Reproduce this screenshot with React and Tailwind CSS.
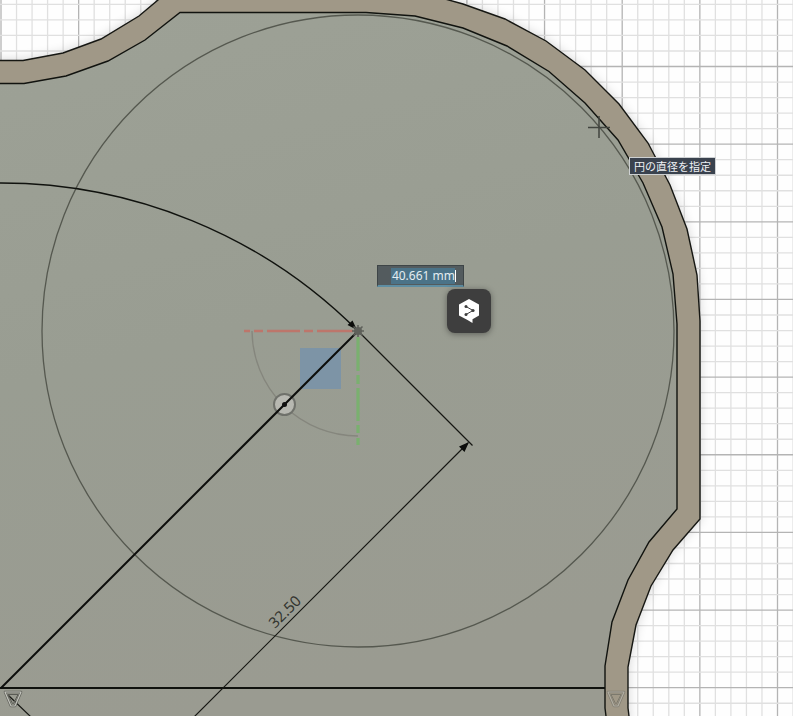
import React from "react";

const OUTER =
  "M-5 60.5 L23 60.5 L63 53 L101 39 L139 16 L158 0 L165 -8 L420 -8 L463 4 L505 19 L546 41 L585 70 L619 104 L648 143 L670 185 L687 229 L697 275 L700 321 L700 519 L673 550 L651 586 L636 625 L628 667 L628 708 L630 724 L-5 724 Z";
const INNER =
  "M-5 83.5 L24 83.5 L66 76 L108 61 L145 40 L180 12.5 L366 12.5 L415 16 L463 28 L507 46 L549 71.5 L585 103 L618 140 L643 183 L662 227 L673 274 L677 324 L677 509 L649 542 L628 580 L612 622 L605 666 L605 708 L607 724 L-5 724 Z";

function Grid() {
  const step = 15.53;
  const columns = Array.from({ length: 52 }, (_, i) => i);
  const rows = Array.from({ length: 47 }, (_, i) => i);
  return (
    <g>
      {columns.map((i) => {
        const x = 1 + i * step;
        const major = i % 5 === 0;
        return <path key={i} d={`M${x} 0V716`} stroke={major ? "#b4b4b4" : "#e0e0e0"} strokeWidth="1.3" />;
      })}
      {rows.map((i) => {
        const y = 4.4 + i * step;
        const major = i % 5 === 4;
        return <path key={i} d={`M0 ${y}H793`} stroke={major ? "#b4b4b4" : "#e0e0e0"} strokeWidth="1.3" />;
      })}
    </g>
  );
}

function Constraint({ x, muted }) {
  return (
    <g transform={`translate(${x} 692)`} strokeLinejoin="round" fill="none" opacity={muted ? 0.5 : 1}>
      <path d="M0 0H16L10 14H6Z" stroke="#60615a" strokeWidth="2.6" />
      <path d="M0 0H16L10 14H6Z" stroke="#c2c3bc" strokeWidth="1.2" />
      <path d="M3 2.5H13L8.500 11.500H7.500Z" stroke="#5a5b55" strokeWidth="1" />
    </g>
  );
}

function Drawing() {
  return (
    <svg
      className="absolute inset-0 h-full w-full"
      viewBox="0 0 793 716"
      preserveAspectRatio="xMinYMin slice"
      role="img"
      aria-label="Sketch"
    >
      <defs>
        <linearGradient id="face" x1="0" y1="0" x2="0.25" y2="1">
          <stop offset="0" stopColor="#9da196" />
          <stop offset="0.5" stopColor="#999d92" />
          <stop offset="1" stopColor="#9a9b91" />
        </linearGradient>
        <filter id="shade" x="-10%" y="-10%" width="120%" height="120%">
          <feGaussianBlur stdDeviation="6" />
        </filter>
      </defs>
      <rect width="793" height="716" fill="#fefefe" />
      <Grid />
      <path d={OUTER} fill="#000" opacity="0.18" filter="url(#shade)" />
      <path d={OUTER} fill="#a09887" stroke="#161713" strokeWidth="1.4" />
      <path d={INNER} fill="url(#face)" stroke="#11130f" strokeWidth="1.4" />

      <circle cx="358" cy="331" r="316" fill="none" stroke="#55584f" strokeWidth="1.3" />
      <path d="M-4 183A505 505 0 0 1 358 331" fill="none" stroke="#10120e" strokeWidth="1.4" />
      <path d="M0 688H605" stroke="#10120e" strokeWidth="2" />

      <path d="M252 331A106 106 0 0 0 358 436" fill="none" stroke="#85867d" strokeWidth="1.3" />
      <rect x="300" y="348" width="41" height="41" fill="#7d94a6" />
      <path d="M244 331h6M254 331h9M267 331h33M304 331h9M317 331h36" stroke="#bd766b" strokeWidth="2.600" />
      <path d="M358 337v34M358 375v9M358 388v33M358 425v8M358 438v7" stroke="#7ab06f" strokeWidth="3.200" />

      <circle cx="284.500" cy="404.500" r="10.500" fill="#b7b8b1" stroke="#6f716b" strokeWidth="2" />
      <path d="M1 688L358 331" stroke="#0c0d0b" strokeWidth="2" />
      <circle cx="284.500" cy="404.500" r="2.500" fill="#111" />

      <path d="M358 331L472.500 445.500M194 717L468 443M8 695L31 717" stroke="#161713" strokeWidth="1.2" />
      <path d="M469 442L464.500 452L459 446.500ZM357 330L347.500 325L352.500 320.500Z" fill="#0c0d0b" />
      <circle cx="358" cy="331" r="4" fill="#5e605a" />
      <path d="M353.500 326.500L362.500 335.500M353.500 335.500L362.500 326.500M358 325v12M352 331h12" stroke="#5e605a" strokeWidth="1.600" />

      <text
        transform="translate(275 629) rotate(-45)"
        className="font-['Noto_Sans',sans-serif] text-[15px]"
        fill="#33352f"
      >
        32.50
      </text>

      <Constraint x={5} />
      <Constraint x={608} muted />
      <path d="M588 127.500H610M599 116V138" stroke="#41443f" strokeWidth="1.500" />
    </svg>
  );
}

function DimensionInput() {
  return (
    <label className="absolute left-[377px] top-[265px] flex h-[22px] w-[87px] items-center justify-end border border-b-2 border-[#3e4547] border-b-[#5e8ea3] bg-[#535b5e] pr-[7px]">
      <input
        aria-label="直径"
        defaultValue="40.661 mm"
        className="h-4 w-16 bg-[#4b7388] p-0 text-right font-['Noto_Sans',sans-serif] text-xs leading-4 text-[#e3edf1] outline-none"
      />
      <span className="h-3 w-px bg-white" />
    </label>
  );
}

function TranslateButton() {
  return (
    <button
      type="button"
      aria-label="翻訳"
      className="absolute left-[447px] top-[289px] flex size-11 items-center justify-center rounded-lg bg-[#3e3e3e] shadow-[0_1px_6px_rgba(0,0,0,0.4)]"
    >
      <svg className="h-6 w-5" viewBox="0 0 20 24" aria-hidden="true">
        <path d="M10 0L20 5.500V16.500L13.500 20.300V24L8.500 21L0 16.500V5.500Z" fill="#fff" />
        <path d="M7 7.500L14 11.500L7 15.500" fill="none" stroke="#3e3e3e" strokeWidth="1" />
        <circle cx="7" cy="7.500" r="1.500" fill="#3e3e3e" />
        <circle cx="14" cy="11.500" r="1.600" fill="#3e3e3e" />
        <circle cx="7" cy="15.500" r="1.500" fill="#3e3e3e" />
      </svg>
    </button>
  );
}

export default function App() {
  return (
    <main className="relative h-screen w-full overflow-hidden bg-white">
      <Drawing />
      <div
        role="tooltip"
        className="absolute left-[629px] top-[157px] flex h-[18px] w-[87px] items-center justify-center whitespace-nowrap border border-[#cdd0d2] bg-[#3a424e] font-['Noto_Sans_CJK_JP',sans-serif] text-[11px] leading-4 text-[#eef1f4]"
      >
        円の直径を指定
      </div>
      <DimensionInput />
      <TranslateButton />
    </main>
  );
}
